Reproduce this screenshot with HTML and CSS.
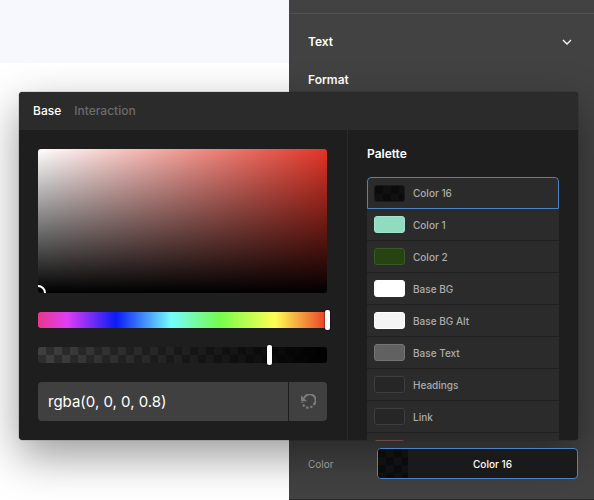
FILE: index.html
```html
<!DOCTYPE html>
<html lang="en">
<head>
<meta charset="utf-8">
<title>Color settings</title>
<link rel="stylesheet" href="styles.css">
</head>
<body>
<div class="app">
  <main class="canvas"><div class="canvas-band"></div></main>
  <aside class="sidebar">
    <section class="section">
      <h2><button class="section-toggle" type="button">Text
        <svg class="chevron" viewBox="0 0 10 6" aria-hidden="true"><path d="M1 1l4 4 4-4"/></svg>
      </button></h2>
      <h3 class="section-subtitle">Format</h3>
    </section>
    <div class="control">
      <label class="control-label" for="color-button">Color</label>
      <button class="color-button" id="color-button" type="button">
        <span class="color-button-chip checker"></span>
        <span class="color-button-name">Color 16</span>
      </button>
    </div>
  </aside>

  <div class="popover" role="dialog" aria-label="Color picker">
    <nav class="tabs">
      <button class="tab tab-active" type="button">Base</button>
      <button class="tab" type="button">Interaction</button>
    </nav>
    <div class="popover-body">
      <section class="picker">
        <div class="saturation"><span class="saturation-handle"></span></div>
        <div class="track track-hue"><input class="slider" type="range" min="0" max="360" value="360" aria-label="Hue"></div>
        <div class="track track-alpha"><input class="slider" type="range" min="0" max="100" value="80" aria-label="Opacity"></div>
        <div class="value-field">
          <input class="value-input" type="text" value="rgba(0, 0, 0, 0.8)" aria-label="Color value">
          <button class="reset" type="button" aria-label="Reset">
            <svg viewBox="0 0 16 16" aria-hidden="true">
              <path class="reset-arc" d="M4 4.4A6 6 0 1 1 13.4 11"/>
              <path class="reset-dash" d="M12.4 12.2A6 6 0 0 1 2.4 8"/>
              <path class="reset-head" d="M1 1.2v6h6z"/>
            </svg>
          </button>
        </div>
      </section>
      <section class="palette">
        <h3 class="palette-title">Palette</h3>
        <ul class="palette-list">
          <li><button class="item item-selected" type="button"><span class="swatch swatch-black checker"></span>Color 16</button></li>
          <li><button class="item" type="button"><span class="swatch swatch-mint"></span>Color 1</button></li>
          <li><button class="item" type="button"><span class="swatch swatch-green"></span>Color 2</button></li>
          <li><button class="item" type="button"><span class="swatch swatch-white"></span>Base BG</button></li>
          <li><button class="item" type="button"><span class="swatch swatch-off-white"></span>Base BG Alt</button></li>
          <li><button class="item" type="button"><span class="swatch swatch-gray"></span>Base Text</button></li>
          <li><button class="item" type="button"><span class="swatch"></span>Headings</button></li>
          <li><button class="item" type="button"><span class="swatch"></span>Link</button></li>
          <li><button class="item" type="button" aria-label="Link hover"><span class="swatch swatch-red"></span></button></li>
        </ul>
      </section>
    </div>
  </div>
</div>
</body>
</html>
```
FILE: styles.css
```css
* { box-sizing: border-box; }

body {
  margin: 0;
  font-family: Inter, "Liberation Sans", sans-serif;
  font-size: 12px;
  line-height: 16px;
  color: #fff;
  background: #fff;
}

h2, h3, ul { margin: 0; padding: 0; font-size: 12px; font-weight: 600; }
ul { list-style: none; }

button, input { font: inherit; color: inherit; margin: 0; padding: 0; border: 0; background: none; }
button { cursor: pointer; text-align: left; }

.app { position: relative; display: flex; min-height: 100vh; overflow: hidden; }

.canvas { flex: 1; background: #fff; }
.canvas-band { height: 63px; background: #f7f8fd; }

.sidebar {
  display: flex;
  flex-direction: column;
  justify-content: space-between;
  width: 305px;
  padding: 13px 0 20px;
  border-bottom: 1px solid #2b2b2b;
  background: #424242;
}

.section { border-top: 1px solid #535353; padding: 20px 20px 0 19px; }
.section-toggle { display: flex; align-items: center; justify-content: space-between; width: 100%; }
.chevron { width: 10px; height: 6px; margin-right: 2px; fill: none; stroke: #fff; stroke-width: 1.3; }
.section-subtitle { margin-top: 22px; }

.control { display: flex; align-items: center; justify-content: space-between; padding: 0 16px 0 19px; }
.control-label { color: #b0b0b0; font-size: 10px; }

.checker { background-image: conic-gradient(#101010 25%, #0b0b0b 0 50%, #101010 0 75%, #0b0b0b 0); background-size: 16px 16px; }

.color-button {
  position: relative;
  z-index: 2;
  display: flex;
  width: 201px;
  height: 31px;
  overflow: hidden;
  border: 1px solid #4a83ca;
  border-radius: 4px;
  background: #1a1a1a;
}
.color-button-chip { width: 30px; height: 100%; }
.color-button-name { flex: 1; align-self: center; text-align: center; font-size: 10px; font-weight: 500; }

.popover {
  position: absolute;
  z-index: 1;
  top: 92px;
  left: 19px;
  right: 16px;
  border-radius: 4px;
  background: #1e1e1e;
  box-shadow: 0 0 1px #000, 0 16px 44px rgba(0, 0, 0, .4);
}

.tabs { display: flex; gap: 13px; height: 38px; padding: 0 14px; border-radius: 4px 4px 0 0; background: #2b2b2b; }
.tab { color: #6c6c6c; font-weight: 500; }
.tab-active { color: #fff; }

.popover-body { display: flex; height: 310px; }

.picker { flex: 1; min-width: 0; display: flex; flex-direction: column; gap: 19px; padding: 19px 20px 19px 19px; }

.saturation {
  position: relative;
  flex: 1;
  overflow: hidden;
  border-radius: 3px;
  background: linear-gradient(to top, #000, transparent), linear-gradient(to right, #fff, #e23426);
}
.saturation-handle {
  position: absolute;
  left: -8px;
  bottom: -8px;
  width: 16px;
  height: 16px;
  border: 2px solid #fff;
  border-radius: 50%;
}

.track { height: 16px; border-radius: 3px; }
.track-hue {
  background: linear-gradient(to right, #e8388c, #e23cf5 10%, #0a1cf5 27%, #75fbfd 46%, #75fb4c 63%, #fffe54 82%, #ea3d27);
}
.track-alpha {
  background-image: linear-gradient(to right, transparent, #000), conic-gradient(#2e2e2e 25%, #404040 0 50%, #2e2e2e 0 75%, #404040 0);
  background-size: auto, 16px 16px;
}
.slider { display: block; appearance: none; width: calc(100% + 6px); height: 100%; margin: 0 -3px; }
.slider::-webkit-slider-thumb { appearance: none; width: 5px; height: 20px; border-radius: 2px; background: #fff; box-shadow: 0 0 2px #000; }

.value-field { display: flex; gap: 1px; height: 39px; overflow: hidden; border-radius: 4px; }
.value-input { flex: 1; min-width: 0; padding: 0 10px; font-size: 15px; background: #404040; }
.reset { display: grid; place-items: center; width: 38px; background: #404040; }
.reset svg { width: 16px; height: 16px; fill: none; stroke: #7c7c7c; stroke-width: 2; }
.reset .reset-dash { stroke-dasharray: 2.4 1.8; }
.reset .reset-head { fill: #7c7c7c; stroke: none; }

.palette { flex: none; width: 231px; padding: 16px 19px 0; border-left: 1px solid #2b2b2b; }
.palette-title { margin-bottom: 15px; }
.palette-list { height: 264px; overflow: hidden; border-radius: 4px 4px 0 0; }

.item {
  display: flex;
  align-items: center;
  gap: 8px;
  width: 100%;
  height: 32px;
  padding: 0 7px;
  border: 0 solid #1e1e1e;
  border-bottom-width: 1px;
  background: #2b2b2b;
  color: #acacac;
  font-size: 10px;
  font-weight: 500;
}
.item-selected { padding: 0 6px; border: 1px solid #4a83ca; border-radius: 4px 4px 0 0; }

.swatch { width: 31px; height: 17px; border: 1px solid #3e3e3e; border-radius: 3px; background-color: #262626; }
.swatch-black { border-color: #1a1a1a; }
.swatch-mint { border-color: #a3e2cc; background-color: #8fdcc0; }
.swatch-green { border-color: #3a5726; background-color: #264314; }
.swatch-white { border-color: #fff; background-color: #fff; }
.swatch-off-white { border-color: #fff; background-color: #f4f4f4; }
.swatch-gray { border-color: #757575; background-color: #616161; }
.swatch-red { border-color: #6a4a46; background-color: #5a3a36; }
```
